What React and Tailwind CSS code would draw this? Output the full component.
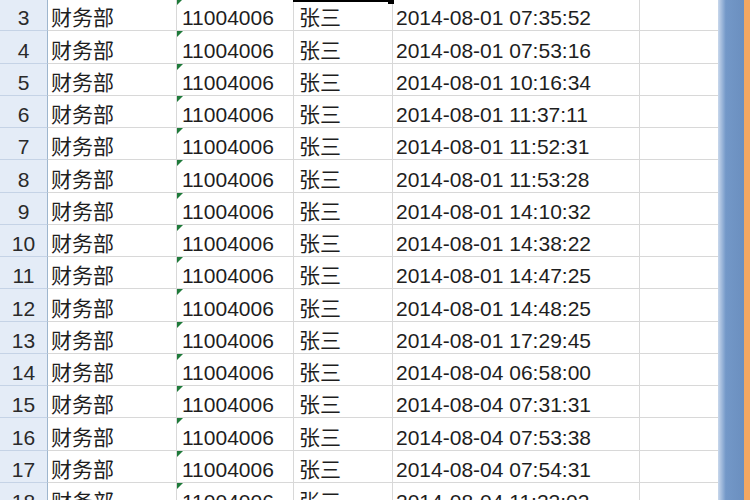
import React from "react";

const times = [
  "2014-08-01 07:35:52",
  "2014-08-01 07:53:16",
  "2014-08-01 10:16:34",
  "2014-08-01 11:37:11",
  "2014-08-01 11:52:31",
  "2014-08-01 11:53:28",
  "2014-08-01 14:10:32",
  "2014-08-01 14:38:22",
  "2014-08-01 14:47:25",
  "2014-08-01 14:48:25",
  "2014-08-01 17:29:45",
  "2014-08-04 06:58:00",
  "2014-08-04 07:31:31",
  "2014-08-04 07:53:38",
  "2014-08-04 07:54:31",
  "2014-08-04 11:22:02",
];

const font = { fontFamily: '"Liberation Sans", "Noto Sans CJK SC", Arial, sans-serif' };

function Row({ n, t }) {
  return (
    <div className="flex h-[32.25px] shrink-0">
      <div className="w-[48px] shrink-0 flex items-end justify-center pb-[2px] bg-[#e4ecf7] border-r border-r-[#9eb6ce] border-b border-b-[#c5d3e6] text-[21px] leading-none text-[#2a2a2a]">
        {n}
      </div>
      <div className="w-[129px] shrink-0 flex items-end pl-[3px] pb-[2px] border-r border-b border-[#d8d8d8] text-[21px] leading-none text-[#1e1e1e]">
        财务部
      </div>
      <div className="relative w-[117px] shrink-0 flex items-end pl-[5px] pb-[2px] border-r border-b border-[#d8d8d8] text-[21px] leading-none text-[#1e1e1e]">
        <svg className="absolute left-0 top-0" width="6" height="6" viewBox="0 0 6 6">
          <polygon points="0,0 6,0 0,6" fill="#1f7a3a" />
        </svg>
        11004006
      </div>
      <div className="w-[99px] shrink-0 flex items-end pl-[5px] pb-[2px] border-r border-b border-[#d8d8d8] text-[21px] leading-none text-[#1e1e1e]">
        张三
      </div>
      <div className="w-[247px] shrink-0 flex items-end pl-[3px] pb-[2px] border-r border-b border-[#d8d8d8] text-[21px] leading-none text-[#1e1e1e]">
        {t}
      </div>
      <div className="w-[78px] shrink-0 border-b border-[#d8d8d8]" />
    </div>
  );
}

export default function App() {
  return (
    <div className="w-[750px] h-[500px] overflow-hidden bg-white flex" style={font}>
      <div className="relative w-[718px] shrink-0 flex flex-col -mt-px">
        {times.map((t, i) => (
          <Row key={i} n={i + 3} t={t} />
        ))}
        <div className="absolute left-[293px] top-px w-[97px] h-[2px] bg-black" />
        <div className="absolute left-[388px] top-px w-[6px] h-[4px] bg-black" />
      </div>
      <div className="w-[26px] shrink-0 h-full bg-linear-to-r from-[#c9d8ec] via-[#7398c8] via-30% to-[#6b8fbf]" />
      <div className="w-[6px] shrink-0 h-full bg-[#f4a761]" />
    </div>
  );
}
